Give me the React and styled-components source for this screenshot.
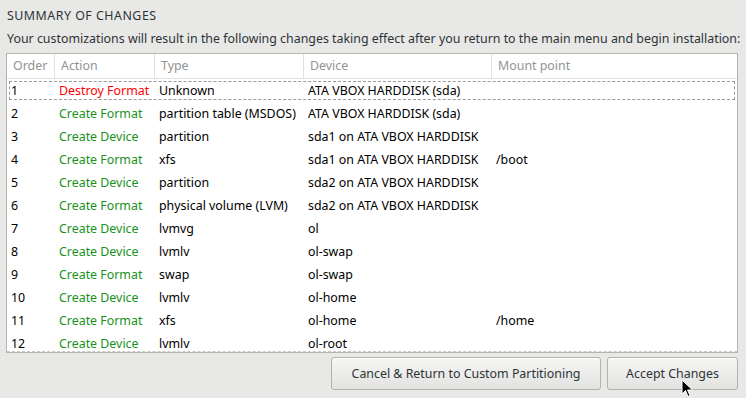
import styled, { createGlobalStyle } from 'styled-components';

const GlobalStyle = createGlobalStyle`
  html, body {
    margin: 0;
    padding: 0;
    background: #e8e8e7;
  }
  body {
    font-family: "Noto Sans", Lato, "DejaVu Sans", sans-serif;
    font-size: 12.4px;
    color: #2e3436;
  }
`;

const Page = styled.div`
  position: relative;
  width: 746px;
  height: 398px;
  box-sizing: border-box;
  padding: 8px 8px 0 6px;
  overflow: hidden;
`;

const Title = styled.div`
  line-height: 15px;
  padding-left: 1px;
  letter-spacing: 0.5px;
  color: #2e3436;
`;

const Description = styled.div`
  line-height: 15px;
  margin-top: 8px;
  padding-left: 1px;
  white-space: nowrap;
`;

const TableBox = styled.div`
  position: relative;
  margin-top: 7px;
  height: 300px;
  box-sizing: border-box;
  border: 1px solid #b4b4b1;
  background: #fff;
  overflow: hidden;

  &::after {
    content: '';
    position: absolute;
    left: 0;
    right: 0;
    bottom: 0;
    border-bottom: 1px dashed #c8c8c6;
  }
`;

const Grid = styled.div`
  display: grid;
  grid-template-columns: 47px 100px 149px 188px 1fr;
`;

const HeadCell = styled.div`
  height: 24px;
  line-height: 24px;
  color: #939393;
  padding-left: 6px;
  border-bottom: 1px solid #e1e1e0;
  border-left: ${(p) => (p.$first ? 'none' : '1px solid #e1e1e0')};
`;

const Row = styled.div`
  display: contents;
`;

const Cell = styled.div`
  height: 23px;
  line-height: 21px;
  padding-left: ${(p) => (p.$first ? 4 : 5)}px;
  padding-top: 1px;
  box-sizing: border-box;
  white-space: nowrap;
  color: ${(p) => p.$color || '#000'};
`;

const FocusRing = styled.div`
  position: absolute;
  left: 2px;
  right: 2px;
  top: 27px;
  height: 17px;
  border: 1px dashed #9a9a9a;
  pointer-events: none;
`;

const ButtonBar = styled.div`
  display: flex;
  justify-content: flex-end;
  gap: 6px;
  margin-top: 4px;
`;

const Button = styled.button`
  height: 33px;
  width: ${(p) => p.$w}px;
  box-sizing: border-box;
  border: 1px solid #b2b2ae;
  border-radius: 3px;
  background: linear-gradient(#f6f6f5, #e2e2e0);
  box-shadow: inset 0 1px #fff;
  font-family: inherit;
  font-size: inherit;
  color: #2e3436;
  padding: 0;
`;

const Cursor = styled.svg`
  position: absolute;
  left: 681px;
  top: 379px;
`;

const rows = [
  ['1', 'Destroy Format', 'Unknown', 'ATA VBOX HARDDISK (sda)', ''],
  ['2', 'Create Format', 'partition table (MSDOS)', 'ATA VBOX HARDDISK (sda)', ''],
  ['3', 'Create Device', 'partition', 'sda1 on ATA VBOX HARDDISK', ''],
  ['4', 'Create Format', 'xfs', 'sda1 on ATA VBOX HARDDISK', '/boot'],
  ['5', 'Create Device', 'partition', 'sda2 on ATA VBOX HARDDISK', ''],
  ['6', 'Create Format', 'physical volume (LVM)', 'sda2 on ATA VBOX HARDDISK', ''],
  ['7', 'Create Device', 'lvmvg', 'ol', ''],
  ['8', 'Create Device', 'lvmlv', 'ol-swap', ''],
  ['9', 'Create Format', 'swap', 'ol-swap', ''],
  ['10', 'Create Device', 'lvmlv', 'ol-home', ''],
  ['11', 'Create Format', 'xfs', 'ol-home', '/home'],
  ['12', 'Create Device', 'lvmlv', 'ol-root', ''],
];

const headers = ['Order', 'Action', 'Type', 'Device', 'Mount point'];

function App() {
  return (
    <Page>
      <GlobalStyle />
      <Title>SUMMARY OF CHANGES</Title>
      <Description>
        Your customizations will result in the following changes taking effect after you return to the main menu and begin installation:
      </Description>
      <TableBox>
        <Grid>
          {headers.map((h, i) => (
            <HeadCell key={h} $first={i === 0}>{h}</HeadCell>
          ))}
          {rows.map((r) => (
            <Row key={r[0]}>
              <Cell $first>{r[0]}</Cell>
              <Cell $color={r[1].startsWith('Destroy') ? '#ff0000' : '#18921a'}>{r[1]}</Cell>
              <Cell>{r[2]}</Cell>
              <Cell>{r[3]}</Cell>
              <Cell>{r[4]}</Cell>
            </Row>
          ))}
        </Grid>
        <FocusRing />
      </TableBox>
      <ButtonBar>
        <Button $w={270}>Cancel &amp; Return to Custom Partitioning</Button>
        <Button $w={131}>Accept Changes</Button>
      </ButtonBar>
      <Cursor width="13" height="20" viewBox="0 0 13 20">
        <path d="M1 1 L1 15 L4.5 11.5 L7 17.5 L9 16.6 L6.6 11 L11.5 11 Z" fill="#000" stroke="#fff" strokeWidth="1" />
      </Cursor>
    </Page>
  );
}

export default App;
